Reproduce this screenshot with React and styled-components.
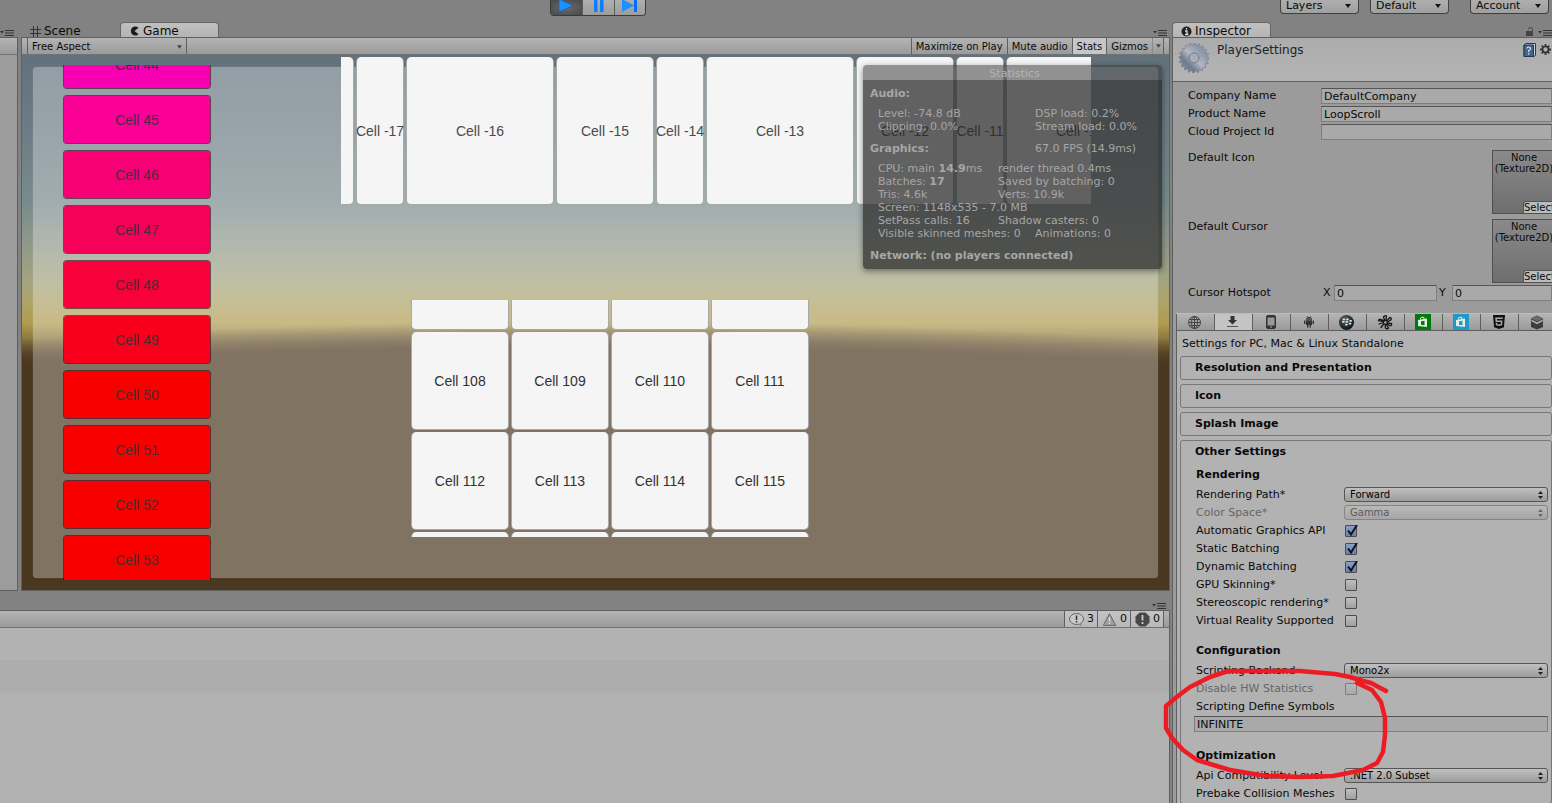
import React from "react";
import styled, { createGlobalStyle, css } from "styled-components";
import { FaBlackberry, FaHtml5 } from "react-icons/fa";

const GlobalStyle = createGlobalStyle`
  * { box-sizing: border-box; }
  body {
    margin: 0;
    background: #828282;
    color: #0a0a0a;
    font-family: "DejaVu Sans", Verdana, sans-serif;
    font-size: 11px;
    line-height: 14px;
  }
  button, input, select { font: inherit; color: inherit; margin: 0; }
`;

const barFill = "linear-gradient(#b4b4b4, #9a9a9a)";
const line = "#5f5f5f";

const Page = styled.div`
  position: relative;
  display: flex;
  flex-direction: column;
  height: 100vh;
  overflow: hidden;
`;

/* ---------- main toolbar ---------- */

const TopBar = styled.header`
  display: flex;
  align-items: flex-start;
  flex: none;
  height: 22px;
  padding: 0 3px 0 550px;
`;

const PlayGroup = styled.div`
  display: flex;
  height: 16px;
  border: 1px solid #3a3a3a;
  border-top: 0;
  border-radius: 0 0 4px 4px;
  overflow: hidden;
`;

const PlayButton = styled.button`
  display: flex;
  justify-content: center;
  width: 32px;
  padding: 0;
  border: 0;
  border-right: 1px solid #5a5a5a;
  background: ${(p) => (p.$on ? "radial-gradient(#6a6a6a, #484848)" : "linear-gradient(#b0b0b0, #9c9c9c)")};
  &:last-child { width: 30px; border-right: 0; }
`;

const TopMenus = styled.div`
  display: flex;
  gap: 11px;
  margin-left: auto;
`;

const TopMenu = styled.button`
  display: flex;
  align-items: center;
  justify-content: space-between;
  width: 79px;
  height: 14px;
  padding: 0 7px 2px 5px;
  border: 1px solid #404040;
  border-top: 0;
  border-radius: 0 0 4px 4px;
  background: linear-gradient(#aeaeae, #a0a0a0);
  line-height: 11px;
  &:last-child { margin-left: 10px; }
`;

/* ---------- docked panels ---------- */

const Workspace = styled.div`
  display: flex;
  flex: 1;
  min-height: 0;
`;

const LeftColumn = styled.div`
  display: flex;
  flex-direction: column;
  flex: 1;
  min-width: 0;
`;

const Row = styled.div`
  display: flex;
  gap: 3px;
`;

const Dock = styled.section`
  display: flex;
  flex-direction: column;
  ${(p) => (p.$grow ? "flex: 1; min-width: 0;" : "flex: none; width: 18px;")}
`;

const TabRow = styled.div`
  display: flex;
  align-items: flex-end;
  flex: none;
  height: ${(p) => p.$height || 15}px;
  padding-right: ${(p) => p.$end || 0}px;
`;

const Tab = styled.button`
  display: flex;
  align-items: center;
  gap: 3px;
  width: 99px;
  height: 15px;
  padding: 2px 0 0 8px;
  border: 1px solid transparent;
  border-bottom: 0;
  border-radius: 4px 4px 0 0;
  background: none;
  font-size: 12px;
  line-height: 14px;
  ${(p) => p.$active && css`
    border-color: #666;
    background: linear-gradient(#c0c0c0, #b4b4b4);
  `}
`;

const PaneMenu = styled.button`
  display: flex;
  margin-left: auto;
  padding: 0;
  border: 0;
  background: none;
`;

const DockBar = styled.div`
  display: flex;
  flex: none;
  height: 18px;
  padding: 0 5px;
  border: 1px solid ${line};
  border-left-width: ${(p) => (p.$open ? 0 : 1)}px;
  border-bottom-color: #727272;
  background: ${barFill};
  font-size: 10px;
`;

const BarButton = styled.button`
  display: flex;
  align-items: center;
  justify-content: ${(p) => (p.$wide ? "space-between" : "center")};
  width: ${(p) => (p.$wide ? "160px" : "auto")};
  padding: 1px 4px 0;
  border: solid ${line};
  border-width: 0 ${(p) => (p.$wide ? 1 : 0)}px 0 1px;
  background: ${(p) => (p.$on ? "#c6c6c6" : "none")};
`;

const BarArrow = styled.span`
  display: flex;
  align-items: center;
  justify-content: center;
  width: 11px;
  border-left: 1px solid #8a8a8a;
`;

const BarEnd = styled.div`
  display: flex;
  margin-left: auto;
  border-right: 1px solid ${line};
`;

const SliverBody = styled.div`
  flex: 1;
  border: solid ${line};
  border-width: 0 1px 1px 0;
  background: #9c9c9c;
`;

/* ---------- game view ---------- */

const Scene = styled.div`
  position: relative;
  display: flex;
  align-items: flex-start;
  padding-bottom: 10px;
  border: solid #606060;
  border-width: 0 1px 1px 1px;
  overflow: hidden;
  background:
    radial-gradient(ellipse 2430px 600px at 50% 890px, #4a371f 99.6%, rgba(74, 55, 31, 0) 103.8%),
    linear-gradient(#62727c 0, #6b7a84 65px, #778a8c 145px, #90998a 190px, #a2a47f 225px, #aca36a 245px, #b29c50 268px, #4a371f 312px);
`;

const ScenePanel = styled.div`
  position: absolute;
  inset: 12px 11px 12px 11px;
  border-radius: 4px;
  background: rgba(255, 255, 255, 0.3);
  box-shadow: 0 0 1px rgba(255, 255, 255, 0.4);
`;

const cellText = css`
  display: flex;
  align-items: center;
  justify-content: center;
  flex: none;
  font-family: "Liberation Sans", Arial, sans-serif;
  font-size: 14px;
  line-height: 16px;
  white-space: nowrap;
`;

const ColorList = styled.div`
  position: relative;
  flex: none;
  width: 148px;
  height: 515px;
  margin: 10px 0 0 41px;
  overflow: hidden;
`;

const ColorTrack = styled.div`
  display: flex;
  flex-direction: column;
  gap: 6px;
  margin-top: -25px;
`;

const ColorCell = styled.div`
  ${cellText}
  height: 49px;
  border: 1px solid rgba(60, 0, 20, 0.6);
  border-radius: 4px;
  background: ${(p) => p.$color};
  background-clip: padding-box;
  color: rgba(50, 50, 50, 0.9);
`;

const Boards = styled.div`
  position: relative;
  display: flex;
  flex-direction: column;
  align-items: flex-start;
  gap: 95px;
  margin: 2px 0 0 130px;
`;

const Strip = styled.div`
  display: flex;
  gap: 2px;
  width: 750px;
  height: 148px;
  overflow: hidden;
`;

const WhiteCell = styled.div`
  ${cellText}
  width: ${(p) => p.$width}px;
  height: ${(p) => p.$height}px;
  border: solid rgba(90, 95, 95, 0.5);
  border-width: 0 1px 1px ${(p) => (p.$cut ? 0 : 1)}px;
  border-radius: ${(p) => (p.$cut ? "0 5px 5px 0" : "5px")};
  background: #f5f5f5;
  color: ${(p) => (p.$dark ? "#323232" : "#4a4a4a")};
`;

const GridView = styled.div`
  width: 398px;
  height: 237px;
  margin-left: 70px;
  overflow: hidden;
`;

const GridTrack = styled.div`
  display: grid;
  grid-template-columns: repeat(4, 98px);
  gap: 2px;
  margin-top: -68px;
`;

/* ---------- statistics overlay ---------- */

const Stats = styled.aside`
  position: absolute;
  top: 10px;
  right: 7px;
  width: 299px;
  height: 204px;
  border-radius: 4px;
  box-shadow: 0 2px 6px rgba(0, 0, 0, 0.45);
  color: #a6a6a6;
  line-height: 13px;
  overflow: hidden;
`;

const StatsTitle = styled.div`
  height: 15px;
  padding: 2px 0 0 4px;
  background: rgba(54, 54, 54, 0.52);
  color: #b4b4b4;
  text-align: center;
`;

const StatsBody = styled.div`
  height: 189px;
  padding: 7px 7px;
  background: rgba(40, 40, 40, 0.72);
  white-space: nowrap;
`;

const StatsGroup = styled.div`
  padding: 7px 0 9px 8px;
`;

const StatsLine = styled.div`
  display: flex;
  font-weight: ${(p) => (p.$head ? "bold" : "normal")};
`;

const StatsFirst = styled.span`
  flex: none;
  width: ${(p) => p.$width}px;
`;

const Light = styled.span`
  font-weight: normal;
`;

/* ---------- console ---------- */

const ConsoleDock = styled.section`
  display: flex;
  flex-direction: column;
  flex: 1;
  min-height: 0;
`;

const Counter = styled.button`
  display: flex;
  align-items: center;
  gap: 3px;
  width: 33px;
  padding: 0 2px 0 4px;
  border: 0;
  border-left: 1px solid ${line};
  background: linear-gradient(#c4c4c4, #b8b8b8);
  font-size: 11px;
`;

const ConsoleBody = styled.div`
  flex: 1;
  border-right: 1px solid ${line};
  background: #b1b1b1;
`;

const LogRow = styled.div`
  height: 32px;
  background: ${(p) => (p.$odd ? "#adadad" : "#b2b2b2")};
`;

/* ---------- inspector ---------- */

const Inspector = styled.aside`
  display: flex;
  flex-direction: column;
  flex: none;
  width: 380px;
  margin-left: 2px;
`;

const InspectorHead = styled.div`
  display: flex;
  align-items: flex-start;
  flex: none;
  gap: 4px;
  height: 45px;
  padding: 5px 0 0 6px;
  border: solid ${line};
  border-width: 1px 0 1px 1px;
  background: linear-gradient(#acacac, #b4b4b4);
`;

const HeadTitle = styled.h1`
  margin: 0 auto 0 4px;
  font-size: 12px;
  font-weight: normal;
  line-height: 14px;
  color: #222;
`;

const InspectorBody = styled.div`
  flex: 1;
  min-height: 0;
  padding: 5px 0 0 3px;
  border-left: 1px solid ${line};
  background: #9b9b9b;
  overflow: hidden;
`;

const TopField = styled.div`
  display: flex;
  align-items: center;
  height: 18px;
  padding-left: 12px;
`;

const Label = styled.label`
  flex: none;
  width: ${(p) => p.$width || 133}px;
  color: ${(p) => (p.$dim ? "#666" : "#0a0a0a")};
  white-space: nowrap;
`;

const TextBox = styled.input`
  ${(p) => (p.$width ? `width: ${p.$width}px;` : "flex: 1; min-width: 0;")}
  height: 16px;
  padding: 0 2px;
  border: 1px solid #7e7e7e;
  border-top-color: #555;
  border-radius: 0;
  background: #a9a9a9;
  outline: none;
`;

const Textures = styled.div`
  display: flex;
  flex-direction: column;
  gap: 5px;
  padding: 9px 0 1px 12px;
`;

const TextureRow = styled.div`
  display: flex;
  justify-content: space-between;
  height: 64px;
`;

const TextureName = styled.span`
  padding-top: 1px;
`;

const TextureBox = styled.div`
  flex: none;
  display: flex;
  flex-direction: column;
  align-items: flex-end;
  justify-content: space-between;
  width: 60px;
  height: 64px;
  border: 1px solid #505050;
  border-right: 0;
  background: linear-gradient(#8a8a8a, #6e6e6e);
  font-size: 10px;
  line-height: 11px;
  text-align: center;
`;

const TextureText = styled.span`
  width: 64px;
  margin-right: -4px;
  padding-top: 1px;
`;

const SelectButton = styled.button`
  width: 29px;
  height: 12px;
  padding: 0;
  border: 1px solid #555;
  border-width: 1px 0 0 1px;
  border-radius: 3px 0 0 0;
  background: #bcbcbc;
  line-height: 11px;
  white-space: nowrap;
`;

const AxisLabel = styled.label`
  width: ${(p) => p.$width}px;
  padding-left: 2px;
`;

const PlatformBar = styled.div`
  display: flex;
  height: 18px;
  margin-top: 11px;
  border-top: 1px solid #bbb;
  border-bottom: 1px solid ${line};
  background: ${barFill};
`;

const PlatformTab = styled.button`
  display: flex;
  align-items: center;
  justify-content: center;
  flex: none;
  width: 38px;
  padding: 0 2px 0 0;
  border: 0;
  border-left: 1px solid ${line};
  background: ${(p) => (p.$on ? "#c4c4c4" : "none")};
  color: #333;
`;

const PlatformPanel = styled.div`
  display: flex;
  flex-direction: column;
  gap: 4px;
  height: 100%;
  border-left: 1px solid ${line};
  padding: 6px 0 0 3px;
  background: #b2b2b2;
`;

const PlatformTitle = styled.p`
  margin: 0 0 1px 2px;
`;

const Fold = styled.section`
  flex: none;
  border: 1px solid #777;
  border-radius: 3px;
`;

const FoldHead = styled.button`
  display: block;
  width: 100%;
  height: 22px;
  padding: 0 0 0 14px;
  border: 0;
  background: none;
  font-weight: bold;
  text-align: left;
`;

const Group = styled.div`
  padding: 5px 3px ${(p) => p.$bottom || 0}px 15px;
`;

const GroupTitle = styled.h2`
  margin: 0 0 4px;
  font-size: 11px;
  font-weight: bold;
  line-height: 14px;
`;

const Setting = styled.div`
  display: flex;
  align-items: center;
  height: 18px;
`;

const SelectWrap = styled.div`
  position: relative;
  flex: 1;
  height: 16px;
  opacity: ${(p) => (p.$dim ? 0.5 : 1)};
  svg { position: absolute; right: 5px; top: 4px; pointer-events: none; }
`;

const Select = styled.select`
  display: block;
  appearance: none;
  width: 100%;
  height: 15px;
  padding: 0 5px;
  border: 1px solid #555;
  border-radius: 3px;
  background: linear-gradient(#c0c0c0, #9c9c9c);
  color: #000;
  opacity: 1;
  font-size: 10px;
  line-height: 13px;
`;

const CheckWrap = styled.span`
  display: grid;
  margin-left: 1px;
  opacity: ${(p) => (p.$dim ? 0.5 : 1)};
  > * { grid-area: 1 / 1; }
  svg { pointer-events: none; }
`;

const Check = styled.input`
  appearance: none;
  width: 12px;
  height: 12px;
  border: 1px solid #4c4c4c;
  border-radius: 1px;
  background: linear-gradient(#bebebe, #a0a0a0);
  &:checked { background: linear-gradient(#8ba0c0, #6682b4); }
`;

const SymbolsBox = styled.div`
  display: flex;
  margin-left: -2px;
`;

const Mark = styled.svg`
  position: absolute;
  top: 664px;
  right: 160px;
  pointer-events: none;
`;

/* ---------- drawings ---------- */

const MenuIcon = () => (
  <svg width="14" height="8" viewBox="0 0 14 8">
    <path d="M0 2h4L2 4.500z" fill="#333" />
    <path d="M5 1.500h9M5 4h9M5 6.500h9" stroke="#333" strokeWidth="1" />
  </svg>
);

const Caret = ({ size = 6 }) => (
  <svg width={size} height="4" viewBox="0 0 6 4"><path d="M0 0h6L3 4z" fill={size < 6 ? "#444" : "#111"} /></svg>
);

const UpDown = () => (
  <svg width="5" height="8" viewBox="0 0 5 8"><path d="M0 3h5L2.500 0zM0 5h5L2.500 8z" fill="#222" /></svg>
);

const SceneIcon = () => (
  <svg width="11" height="11" viewBox="0 0 11 11">
    <path d="M3.500 0v11M7.500 0v11M0 3.500h11M0 7.500h11" stroke="#333" fill="none" />
  </svg>
);

const GameIcon = () => (
  <svg width="11" height="10" viewBox="0 0 11 10">
    <path d="M9.500 1.800A4.500 4.500 0 1 0 9.500 8.200L5.500 5z" fill="#1c1c1c" />
  </svg>
);

const InfoIcon = () => (
  <svg width="11" height="11" viewBox="0 0 11 11">
    <circle cx="5.500" cy="5.500" r="5" fill="#222" />
    <path d="M5.500 2v1.500M4 5h2v3M4 8.500h3.500" stroke="#ddd" strokeWidth="1.300" fill="none" />
  </svg>
);

const gearPoints = Array.from({ length: 80 }, (_, i) => {
  const r = i % 4 < 2 ? 15 : 12.8;
  const a = (i / 80) * Math.PI * 2;
  return `${(15 + r * Math.cos(a)).toFixed(1)},${(15 + r * Math.sin(a)).toFixed(1)}`;
}).join(" ");

const BigGear = () => (
  <svg width="30" height="30" viewBox="0 0 30 30">
    <defs>
      <linearGradient id="steel" x1="0" y1="1" x2="1" y2="0">
        <stop offset="0" stopColor="#8b92a0" />
        <stop offset=".3" stopColor="#6f7b91" />
        <stop offset=".5" stopColor="#b3b9c2" />
        <stop offset=".75" stopColor="#8a95a8" />
        <stop offset="1" stopColor="#b8bcc4" />
      </linearGradient>
    </defs>
    <polygon points={gearPoints} fill="url(#steel)" stroke="#757b85" strokeWidth=".7" />
    <circle cx="15" cy="15" r="5" fill="#a9adb3" stroke="#727985" />
  </svg>
);

const LockIcon = () => (
  <svg width="12" height="10" viewBox="0 0 12 10">
    <path d="M0 4h7v5H0z" fill="#444" />
    <path d="M2.500 2.500A2 2 0 0 1 6.500 2.500V4" stroke="#444" fill="none" />
  </svg>
);

const HelpIcon = () => (
  <svg width="13" height="14" viewBox="0 0 13 14">
    <path d="M1 2L3 .5h9.500v12L11 13.500H1z" fill="#ccd4de" stroke="#283848" />
    <path d="M1 2h9.500v11.500H1z" fill="#45648c" stroke="#283848" />
    <path d="M4 5.500q0-1.500 1.700-1.500t1.800 1.500q0 1-1.800 2.200v1.300M5.700 10v1.500" stroke="#e4eaf2" fill="none" strokeWidth="1.200" />
  </svg>
);

const CogIcon = () => (
  <svg width="12" height="12" viewBox="0 -1 12 12">
    <path d="M5.500 0v11M0 5.500h11M1.700 1.700l7.600 7.600M9.300 1.700L1.700 9.300" stroke="#333" strokeWidth="1.800" />
    <circle cx="5.500" cy="5.500" r="3" fill="#b0b0b0" stroke="#333" strokeWidth="1.700" />
  </svg>
);

const Tick = () => (
  <svg width="13" height="12" viewBox="0 0 13 12">
    <path d="M3 5.500l3 4L12 0" stroke="#10131c" strokeWidth="2" fill="none" />
  </svg>
);

const GlobeIcon = () => (
  <svg width="13" height="13" viewBox="0 0 13 13" fill="none" stroke="#444">
    <circle cx="6.500" cy="6.500" r="6" />
    <ellipse cx="6.500" cy="6.500" rx="3" ry="6" />
    <path d="M6.500 .5v12M.5 6.500h12M1.500 3.500h10M1.500 9.500h10" />
  </svg>
);

const DownIcon = () => (
  <svg width="11" height="12" viewBox="0 0 11 12">
    <path d="M3.500 0h4v4H10L5.500 8.500 1 4h2.500z" fill="#333" />
    <path d="M0 10.500h11" stroke="#555" />
  </svg>
);

const TabletIcon = () => (
  <svg width="10" height="14" viewBox="0 0 10 14">
    <rect x=".5" y=".5" width="9" height="13" rx="1.500" fill="#333" stroke="#333" />
    <path d="M1.500 2.500h7v8h-7z" fill="#999" />
    <path d="M4 12h2" stroke="#aaa" />
  </svg>
);

const RobotIcon = () => (
  <svg width="10" height="12" viewBox="0 0 10 12" fill="#333">
    <path d="M2 3.800a3 2.800 0 0 1 6 0zM2 4.300h6V9H2zM0 4.500h1.400v3.500H0zM8.600 4.500H10v3.500H8.600zM3 9h1.400v2.500H3zM5.600 9H7v2.500H5.600z" />
    <path d="M3 0l1 1.500M7 0L6 1.500" stroke="#333" strokeWidth=".7" />
    <path d="M3.500 2.500h.8M5.700 2.500h.8" stroke="#bbb" strokeWidth=".8" />
  </svg>
);

const Ball = styled.span`
  display: flex;
  align-items: center;
  justify-content: center;
  width: 15px;
  height: 15px;
  border-radius: 50%;
  background: radial-gradient(circle at 40% 30%, #566468, #10191c 70%);
  color: #ddd;
`;

const TizenIcon = () => (
  <svg width="16" height="15" viewBox="0 0 16 15" fill="none" stroke="#151515" strokeLinecap="round">
    <path d="M8 6L6.500 2Q8 0 9.500 1L9 5M9.500 6l3.500-3.500q1.800.5 1 2.200L10.500 7M10 8l4.500.5q.5 2-1.500 2.200L10 9M9 9l2.500 4q-1.500 1.500-3 0L8 9.500M7 8.500L4 12.500M6.500 7.500L2 9M6.500 6.500L1.500 5.500q.5-1.500 2-1.200L7 5.500" strokeWidth="1.300" />
  </svg>
);

const StoreIcon = ({ color }) => (
  <svg width="16" height="16" viewBox="0 0 16 16">
    <path d="M0 0h16v16H0z" fill={color} />
    <path d="M3 6l9-1.500v8.500L3 12z" fill="#e4eee4" />
    <path d="M5.500 5.500V4q1.500-1.500 3.500-.5V5" stroke="#e4eee4" fill="none" />
    <path d="M6 7.200l3.500-.4v4.400L6 10.800z" fill={color} />
  </svg>
);

const BoxIcon = () => (
  <svg width="14" height="15" viewBox="0 0 14 15">
    <path d="M1 3.500L7 .5l6 3v8.500l-6 2.500-6-2.500z" fill="#3c3c3c" />
    <path d="M1 3.500L7 .5l6 3-6 3z" fill="#6a6a6a" />
    <path d="M1.500 4.500L7 7.500l5.500-3v1.800L7 9.300l-5.500-3z" fill="#b4b4b4" />
  </svg>
);

const PlayIcon = () => (
  <svg width="18" height="13" viewBox="0 0 18 13"><path d="M1 -1L15 5.500 1 12z" fill="#1e90ff" stroke="#1550b0" strokeWidth=".5" /></svg>
);
const PauseIcon = () => (
  <svg width="10" height="12" viewBox="0 0 10 12"><path d="M0 0h3.500v12H0zM6 0h3.500v12H6z" fill="#0f7dff" /></svg>
);
const StepIcon = () => (
  <svg width="16" height="13" viewBox="0 0 16 13"><path d="M0 -1L12 5.500 0 12z" fill="#1e90ff" /><path d="M12 0h3v12h-3z" fill="#0a6cff" /></svg>
);

const NoteIcon = () => (
  <svg width="15" height="13" viewBox="0 0 15 13">
    <ellipse cx="7.500" cy="6" rx="7" ry="5.500" fill="#cacaca" stroke="#666" />
    <path d="M9 11l3 1.500-.5-2.500" fill="#cacaca" stroke="#666" strokeWidth=".7" />
    <path d="M7.500 2.500v4.500M7.500 8v1.500" stroke="#333" strokeWidth="1.500" />
  </svg>
);
const WarnIcon = () => (
  <svg width="15" height="13" viewBox="0 0 15 13">
    <path d="M7.500 .8L13.700 12.400H1.300z" fill="#a0a0a0" stroke="#666" />
    <path d="M7.500 4v4.500M7.500 9.500V11" stroke="#ddd" strokeWidth="1.300" />
  </svg>
);
const ErrorIcon = () => (
  <svg width="15" height="15" viewBox="0 0 15 15">
    <path d="M4.500 .5h6l4 4v6l-4 4h-6l-4-4v-6z" fill="#484848" />
    <path d="M7.500 3v5.500M7.500 10v2" stroke="#ccc" strokeWidth="1.800" />
  </svg>
);

/* ---------- data ---------- */

const colorCells = [
  [44, "#f600b2"], [45, "#fa0096"], [46, "#f70076"], [47, "#f70057"], [48, "#f80039"],
  [49, "#f8001c"], [50, "#f80000"], [51, "#f80000"], [52, "#f80000"], [53, "#f80000"],
];
const stripCells = [[17, 48], [16, 148], [15, 98], [14, 48], [13, 148], [12, 98], [11, 48], [10, 148]];
const gridCells = ["", "", "", "", 108, 109, 110, 111, 112, 113, 114, 115, "", "", "", ""];

const platforms = [
  ["Web", <GlobeIcon />],
  ["Standalone", <DownIcon />],
  ["iOS", <TabletIcon />],
  ["Android", <RobotIcon />],
  ["BlackBerry", <Ball><FaBlackberry size={10} /></Ball>],
  ["Tizen", <TizenIcon />],
  ["Xbox", <StoreIcon color="#007a08" />],
  ["Windows Store", <StoreIcon color="#2199c8" />],
  ["WebGL", <FaHtml5 size={16} color="#111" />],
  ["Samsung TV", <BoxIcon />],
];

const SelectSetting = ({ id, label, value, dim }) => (
  <Setting>
    <Label htmlFor={id} $width={148} $dim={dim}>{label}</Label>
    <SelectWrap $dim={dim}>
      <Select id={id} disabled={dim} defaultValue={value}><option>{value}</option></Select>
      <UpDown />
    </SelectWrap>
  </Setting>
);

const CheckSetting = ({ id, label, on, dim }) => (
  <Setting>
    <Label htmlFor={id} $width={148} $dim={dim}>{label}</Label>
    <CheckWrap $dim={dim}>
      <Check type="checkbox" id={id} defaultChecked={on} disabled={dim} />
      {on && <Tick />}
    </CheckWrap>
  </Setting>
);

const TextureSetting = ({ label }) => (
  <TextureRow>
    <TextureName>{label}</TextureName>
    <TextureBox>
      <TextureText>None (Texture2D)</TextureText>
      <SelectButton>Select</SelectButton>
    </TextureBox>
  </TextureRow>
);

const StatRow = ({ a, b, wide }) => (
  <StatsLine>
    <StatsFirst $width={wide ? 157 : 120}>{a}</StatsFirst>
    <span>{b}</span>
  </StatsLine>
);

function GameView() {
  return (
    <Scene>
      <ScenePanel />
      <ColorList>
        <ColorTrack>
          {colorCells.map(([n, c]) => <ColorCell key={n} $color={c}>Cell {n}</ColorCell>)}
        </ColorTrack>
      </ColorList>
      <Boards>
        <Strip>
          <WhiteCell $cut $width={13} $height={148} />
          {stripCells.map(([n, w]) => <WhiteCell key={n} $width={w} $height={148}>Cell -{n}</WhiteCell>)}
        </Strip>
        <GridView>
          <GridTrack>
            {gridCells.map((n, i) => (
              <WhiteCell key={i} $dark $width={98} $height={98}>{n && `Cell ${n}`}</WhiteCell>
            ))}
          </GridTrack>
        </GridView>
      </Boards>
      <Stats>
        <StatsTitle>Statistics</StatsTitle>
        <StatsBody>
          <StatsLine $head>Audio:</StatsLine>
          <StatsGroup>
            <StatRow wide a="Level: -74.8 dB" b="DSP load: 0.2%" />
            <StatRow wide a="Clipping: 0.0%" b="Stream load: 0.0%" />
          </StatsGroup>
          <StatsLine $head>
            <StatsFirst $width={165}>Graphics:</StatsFirst>
            <Light>67.0 FPS (14.9ms)</Light>
          </StatsLine>
          <StatsGroup>
            <StatRow a={<>CPU: main <b>14.9</b>ms</>} b="render thread 0.4ms" />
            <StatRow a={<>Batches: <b>17</b></>} b="Saved by batching: 0" />
            <StatRow a="Tris: 4.6k" b="Verts: 10.9k" />
            <StatRow a="Screen: 1148x535 - 7.0 MB" />
            <StatRow a="SetPass calls: 16" b="Shadow casters: 0" />
            <StatRow wide a="Visible skinned meshes: 0" b="Animations: 0" />
          </StatsGroup>
          <StatsLine $head>Network: (no players connected)</StatsLine>
        </StatsBody>
      </Stats>
    </Scene>
  );
}

export default function App() {
  return (
    <Page>
      <GlobalStyle />
      <TopBar>
        <PlayGroup>
          <PlayButton $on aria-label="Play"><PlayIcon /></PlayButton>
          <PlayButton aria-label="Pause"><PauseIcon /></PlayButton>
          <PlayButton aria-label="Step"><StepIcon /></PlayButton>
        </PlayGroup>
        <TopMenus>
          <TopMenu>Layers <Caret /></TopMenu>
          <TopMenu>Default <Caret /></TopMenu>
          <TopMenu>Account <Caret /></TopMenu>
        </TopMenus>
      </TopBar>

      <Workspace>
        <LeftColumn>
          <Row>
            <Dock>
              <TabRow $end={4}><PaneMenu aria-label="Panel menu"><MenuIcon /></PaneMenu></TabRow>
              <DockBar $open />
              <SliverBody />
            </Dock>
            <Dock $grow>
              <TabRow $end={3}>
                <Tab><SceneIcon />Scene</Tab>
                <Tab $active><GameIcon />Game</Tab>
                <PaneMenu aria-label="Panel menu"><MenuIcon /></PaneMenu>
              </TabRow>
              <DockBar>
                <BarButton $wide>Free Aspect <Caret size={5} /></BarButton>
                <BarEnd>
                  <BarButton>Maximize on Play</BarButton>
                  <BarButton>Mute audio</BarButton>
                  <BarButton $on>Stats</BarButton>
                  <BarButton>Gizmos</BarButton>
                  <BarArrow><Caret size={5} /></BarArrow>
                </BarEnd>
              </DockBar>
              <GameView />
            </Dock>
          </Row>

          <ConsoleDock>
            <TabRow $height={19} $end={4}><PaneMenu aria-label="Panel menu"><MenuIcon /></PaneMenu></TabRow>
            <DockBar $open>
              <BarEnd>
                <Counter><NoteIcon />3</Counter>
                <Counter><WarnIcon />0</Counter>
                <Counter><ErrorIcon />0</Counter>
              </BarEnd>
            </DockBar>
            <ConsoleBody>
              <LogRow />
              <LogRow $odd />
            </ConsoleBody>
          </ConsoleDock>
        </LeftColumn>

        <Inspector>
          <TabRow>
            <Tab $active><InfoIcon />Inspector</Tab>
            <PaneMenu aria-label="Lock"><LockIcon /></PaneMenu>
            <MenuIcon />
          </TabRow>
          <InspectorHead>
            <BigGear />
            <HeadTitle>PlayerSettings</HeadTitle>
            <HelpIcon />
            <CogIcon />
          </InspectorHead>
          <InspectorBody>
            <TopField><Label htmlFor="company">Company Name</Label><TextBox id="company" defaultValue="DefaultCompany" /></TopField>
            <TopField><Label htmlFor="product">Product Name</Label><TextBox id="product" defaultValue="LoopScroll" /></TopField>
            <TopField><Label htmlFor="cloud">Cloud Project Id</Label><TextBox id="cloud" defaultValue="" /></TopField>
            <Textures>
              <TextureSetting label="Default Icon" />
              <TextureSetting label="Default Cursor" />
            </Textures>
            <TopField>
              <Label as="span">Cursor Hotspot</Label>
              <AxisLabel htmlFor="hx" $width={13}>X</AxisLabel>
              <TextBox id="hx" $width={103} defaultValue="0" />
              <AxisLabel htmlFor="hy" $width={15}>Y</AxisLabel>
              <TextBox id="hy" defaultValue="0" />
            </TopField>
            <PlatformBar>
              {platforms.map(([name, icon], i) => (
                <PlatformTab key={name} $on={i === 1} aria-label={name}>{icon}</PlatformTab>
              ))}
            </PlatformBar>
            <PlatformPanel>
              <PlatformTitle>Settings for PC, Mac &amp; Linux Standalone</PlatformTitle>
              <Fold><FoldHead>Resolution and Presentation</FoldHead></Fold>
              <Fold><FoldHead>Icon</FoldHead></Fold>
              <Fold><FoldHead>Splash Image</FoldHead></Fold>
              <Fold>
                <FoldHead>Other Settings</FoldHead>
                <Group $bottom={9}>
                  <GroupTitle>Rendering</GroupTitle>
                  <SelectSetting id="path" label="Rendering Path*" value="Forward" />
                  <SelectSetting id="space" label="Color Space*" value="Gamma" dim />
                  <CheckSetting id="api" label="Automatic Graphics API" on />
                  <CheckSetting id="static" label="Static Batching" on />
                  <CheckSetting id="dynamic" label="Dynamic Batching" on />
                  <CheckSetting id="skin" label="GPU Skinning*" />
                  <CheckSetting id="stereo" label="Stereoscopic rendering*" />
                  <CheckSetting id="vr" label="Virtual Reality Supported" />
                </Group>
                <Group $bottom={12}>
                  <GroupTitle>Configuration</GroupTitle>
                  <SelectSetting id="backend" label="Scripting Backend" value="Mono2x" />
                  <CheckSetting id="hw" label="Disable HW Statistics" dim />
                  <Setting><Label htmlFor="symbols">Scripting Define Symbols</Label></Setting>
                  <SymbolsBox><TextBox id="symbols" defaultValue="INFINITE" /></SymbolsBox>
                </Group>
                <Group>
                  <GroupTitle>Optimization</GroupTitle>
                  <SelectSetting id="compat" label="Api Compatibility Level" value=".NET 2.0 Subset" />
                  <CheckSetting id="prebake" label="Prebake Collision Meshes" />
                </Group>
              </Fold>
            </PlatformPanel>
          </InspectorBody>
        </Inspector>
      </Workspace>

      <Mark width="232" height="118" viewBox="1160 664 232 118" fill="none" stroke="#ed1c24" strokeWidth="4.500" strokeLinecap="round" strokeLinejoin="round">
        <path d="M1386 691L1371 683 1363 681 1350 677 1335 674 1300 671 1228 671 1210 677 1190 687 1178 696 1166 706 1166 728 1172 738 1183 750 1197 760 1230 770 1266 776 1300 777 1333 776 1363 770 1377 763 1383 752 1385 735 1385 718 1381 702 1372 690 1357 683" />
      </Mark>
    </Page>
  );
}
